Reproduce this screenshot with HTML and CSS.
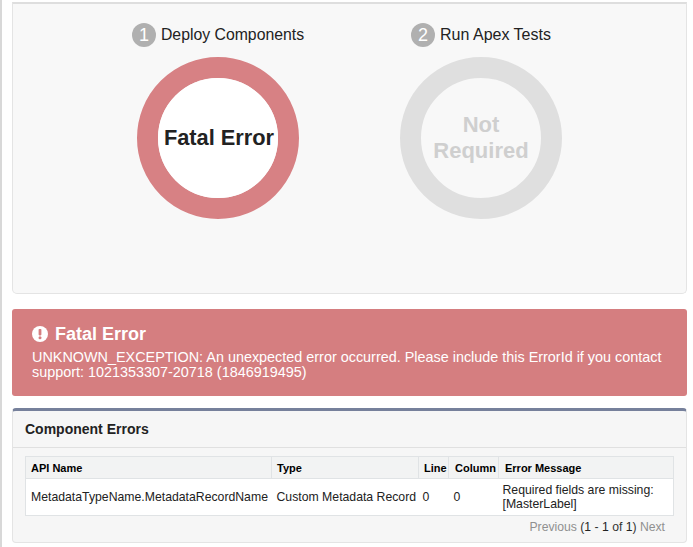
FILE: index.html
```html
<!DOCTYPE html>
<html lang="en">
<head>
<meta charset="utf-8">
<title>Deployment Status</title>
<link rel="stylesheet" href="styles.css">
</head>
<body>
<div class="page">
  <section class="progress-card">
    <div class="stage stage-one">
      <div class="stage-title"><span class="step">1</span><span>Deploy Components</span></div>
      <div class="ring ring-error"><div class="ring-inner">Fatal Error</div></div>
    </div>
    <div class="stage stage-two">
      <div class="stage-title"><span class="step">2</span><span>Run Apex Tests</span></div>
      <div class="ring ring-off"><div class="ring-inner">Not Required</div></div>
    </div>
  </section>
  <section class="alert">
    <h2 class="alert-title">
      <svg class="alert-icon" viewBox="0 0 16 16" width="16" height="16" aria-hidden="true"><circle cx="8" cy="8" r="8" fill="#fff"/><rect x="6.6" y="3" width="2.8" height="6.4" rx="0.8" fill="#d57e80"/><circle cx="8" cy="11.7" r="1.5" fill="#d57e80"/></svg>
      <span>Fatal Error</span>
    </h2>
    <p class="alert-text">UNKNOWN_EXCEPTION: An unexpected error occurred. Please include this ErrorId if you contact support: 1021353307-20718 (1846919495)</p>
  </section>
  <section class="errors">
    <h3 class="errors-title">Component Errors</h3>
    <div class="errors-body">
      <table class="grid">
        <thead>
          <tr><th class="c-api">API Name</th><th class="c-type">Type</th><th class="c-line">Line</th><th class="c-col">Column</th><th class="c-msg">Error Message</th></tr>
        </thead>
        <tbody>
          <tr><td class="single">MetadataTypeName.MetadataRecordName</td><td class="single">Custom Metadata Record</td><td class="tight">0</td><td>0</td><td class="tight">Required fields are missing: [MasterLabel]</td></tr>
        </tbody>
      </table>
      <div class="pager"><span class="muted">Previous</span> (<b>1</b> - <b>1</b> of <b>1</b>) <span class="muted">Next</span></div>
    </div>
  </section>
</div>
</body>
</html>
```
FILE: styles.css
```css
* { box-sizing: border-box; }
html, body { margin: 0; padding: 0; background: #fff; }
body { font-family: "Liberation Sans", Arial, sans-serif; color: #16325c; height: 547px; overflow: hidden; }
.page { height: 547px; padding: 2px 6px 0 10px; border-left: 2px solid #d8d8d8; }
.progress-card { height: 292px; background: #f8f8f8; border: 1px solid #e4e4e4; border-top: 2px solid #dedede; border-radius: 0 0 5px 5px; display: flex; }
.stage { display: flex; flex-direction: column; align-items: center; width: 162px; }
.stage-one { margin-left: 124px; }
.stage-two { margin-left: 101px; }
.stage-title { display: flex; align-items: center; gap: 5px; margin-top: 19px; font-size: 16px; line-height: 24px; color: #222; white-space: nowrap; }
.stage-one .stage-title { font-size: 15.8px; }
.step { width: 24px; height: 24px; border-radius: 50%; background: #b0b0b0; color: #fff; font-size: 18px; text-align: center; flex: none; }
.ring { width: 162px; height: 162px; border-radius: 50%; border: 21px solid; margin-top: 10px; display: flex; }
.ring-inner { flex: 1; border-radius: 50%; display: flex; align-items: center; justify-content: center; text-align: center; font-size: 22px; font-weight: 700; line-height: 26px; }
.ring-error { border-color: #d78184; }
.ring-error .ring-inner { background: #fff; color: #222; font-size: 21.8px; padding-left: 2px; }
.ring-off { border-color: #dfdfdf; }
.ring-off .ring-inner { color: #cfcfcf; }
.alert { margin-top: 15px; height: 87px; background: #d57e80; border-radius: 3px; color: #fff; padding: 15px 20px; }
.alert-title { margin: 0 0 6px; display: flex; align-items: center; gap: 7px; font-size: 18px; line-height: 20px; font-weight: 700; }
.alert-text { margin: 0; font-size: 14.4px; line-height: 15px; }
.errors { margin-top: 12px; height: 135px; background: #f6f6f6; border: 1px solid #e4e4e4; border-top: 3px solid #76809b; border-radius: 4px; }
.errors-title { margin: 0; height: 37px; padding: 0 12px; font-size: 14px; line-height: 36px; font-weight: 700; color: #222; border-bottom: 1px solid #e0e0e0; }
.errors-body { padding: 8px 12px 0; }
.grid { width: 649px; border-collapse: collapse; font-size: 12.25px; color: #222; table-layout: fixed; background: #fff; border: 1px solid #e0e3e5; }
.grid th { background: #f2f3f3; height: 22px; padding: 0 5px; text-align: left; font-size: 11px; font-weight: 700; color: #000; border-right: 1px solid #e0e3e5; border-bottom: 1px solid #e0e3e5; white-space: nowrap; }
.grid th.c-col, .grid th.c-msg { padding-left: 6px; }
.grid td { height: 37px; padding: 0 5px; line-height: 14px; vertical-align: middle; }
.grid td.single { white-space: nowrap; }
.grid td.tight { padding: 0 4px; }
.c-api { width: 246px; }
.c-type { width: 147px; }
.c-line { width: 30px; }
.c-col { width: 50px; }
.pager { margin-top: 4px; padding-right: 9px; text-align: right; font-size: 12.2px; line-height: 14px; color: #333; }
.pager b { font-weight: 400; color: #222; }
.muted { color: #909090; }
```
